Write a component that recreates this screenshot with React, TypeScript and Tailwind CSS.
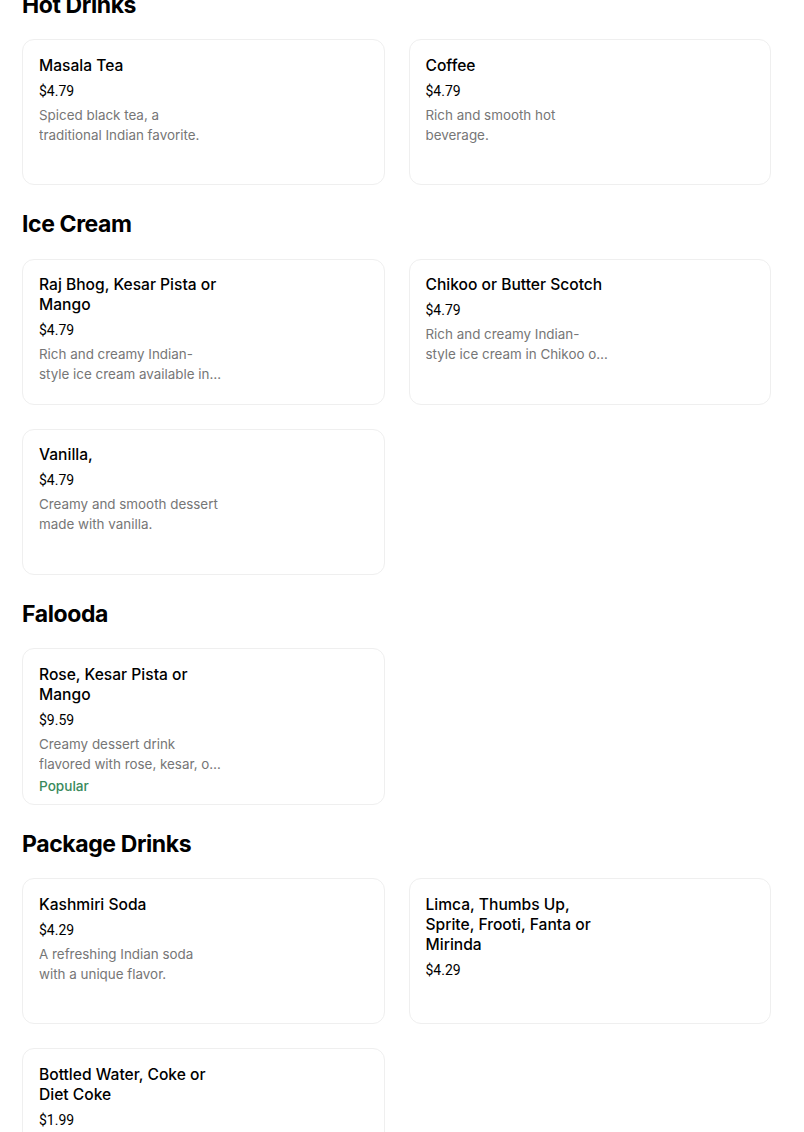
import React from 'react'

type Item = {
  name: string
  price: string
  desc?: string
  popular?: boolean
}

type Section = {
  title: string
  items: Item[]
}

const MENU: Section[] = [
  {
    title: 'Hot Drinks',
    items: [
      { name: 'Masala Tea', price: '$4.79', desc: 'Spiced black tea, a traditional Indian favorite.' },
      { name: 'Coffee', price: '$4.79', desc: 'Rich and smooth hot beverage.' },
    ],
  },
  {
    title: 'Ice Cream',
    items: [
      {
        name: 'Raj Bhog, Kesar Pista or Mango',
        price: '$4.79',
        desc: 'Rich and creamy Indian-style ice cream available in Raj Bhog, Kesar Pista or Mango flavors.',
      },
      {
        name: 'Chikoo or Butter Scotch',
        price: '$4.79',
        desc: 'Rich and creamy Indian-style ice cream in Chikoo or Butter Scotch flavors.',
      },
      { name: 'Vanilla,', price: '$4.79', desc: 'Creamy and smooth dessert made with vanilla.' },
    ],
  },
  {
    title: 'Falooda',
    items: [
      {
        name: 'Rose, Kesar Pista or Mango',
        price: '$9.59',
        desc: 'Creamy dessert drink flavored with rose, kesar, or mango with vermicelli and basil seeds.',
        popular: true,
      },
    ],
  },
  {
    title: 'Package Drinks',
    items: [
      { name: 'Kashmiri Soda', price: '$4.29', desc: 'A refreshing Indian soda with a unique flavor.' },
      { name: 'Limca, Thumbs Up, Sprite, Frooti, Fanta or Mirinda', price: '$4.29' },
      { name: 'Bottled Water, Coke or Diet Coke', price: '$1.99' },
    ],
  },
]

function ItemCard({ item }: { item: Item }) {
  return (
    <div className="min-h-[146px] rounded-xl border border-[#efefef] bg-white px-4 pt-[15.5px] pb-[8px]">
      <div className="w-[183px]">
        <div className="text-[15.6px] leading-5 font-medium text-black">{item.name}</div>
        <div className="mt-[5px] font-['Roboto',sans-serif] text-[14px] leading-5 text-black">{item.price}</div>
        {item.desc && (
          <div className="mt-1 line-clamp-2 text-[13.4px] leading-5 text-[#767676]">{item.desc}</div>
        )}
        {item.popular && (
          <div className="mt-0.5 text-[13.6px] leading-5 font-medium text-[#3a8a5c]">Popular</div>
        )}
      </div>
    </div>
  )
}

export default function App() {
  return (
    <div
      className="min-h-screen bg-white pl-[22px] pr-[33px] text-black"
      style={{ fontFamily: 'Inter, "Noto Sans", "Liberation Sans", sans-serif' }}
    >
      <div className="-mt-[10.5px] flex flex-col gap-6">
        {MENU.map(section => (
          <section key={section.title}>
            <h2 className="mb-[19.5px] text-[23px] leading-[30px] font-bold tracking-[-0.4px]">{section.title}</h2>
            <div className="grid grid-cols-2 gap-6">
              {section.items.map(item => (
                <ItemCard key={item.name} item={item} />
              ))}
            </div>
          </section>
        ))}
      </div>
    </div>
  )
}
